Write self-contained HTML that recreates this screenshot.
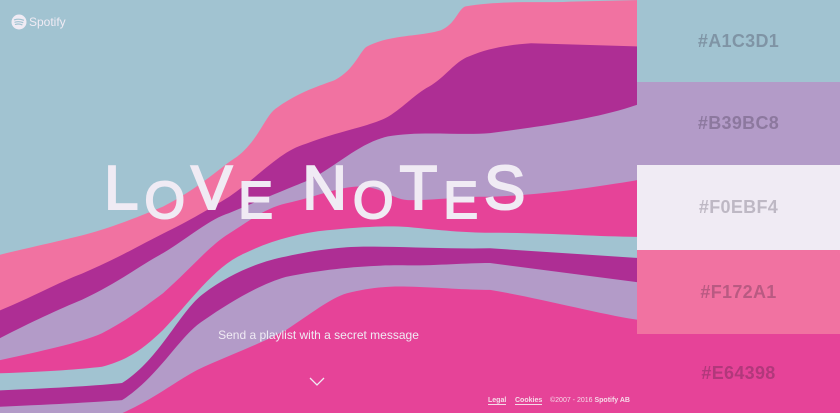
<!DOCTYPE html>
<html><head><meta charset="utf-8"><style>
*{margin:0;padding:0;box-sizing:border-box}
html,body{width:840px;height:413px;overflow:hidden}
body{position:relative;font-family:"Liberation Sans",sans-serif;background:#E64398}
svg.bg{position:absolute;left:0;top:0}
.sw{position:absolute;left:637px;width:203px;display:flex;align-items:center;justify-content:center;font-weight:bold;font-size:18px;color:rgba(40,30,50,0.28);letter-spacing:0.3px}
.title{position:absolute;left:104px;top:158px;height:70px;color:#f0ebf4;white-space:nowrap;font-size:62px;line-height:1;letter-spacing:6px;-webkit-text-stroke:2px #f0ebf4}
.title span{display:inline-block}
.s{font-size:52px;position:relative;top:9px}
.sub{position:absolute;left:0;width:637px;text-align:center;top:328px;color:#f0ebf4;font-size:12px}
.foot{position:absolute;top:397px;font-size:7px;color:#f5dbe9}
.foot u{text-decoration:none;border-bottom:1px solid #f5dbe9;font-weight:bold}
</style></head><body>
<svg class="bg" width="640" height="413" viewBox="0 0 640 413">
<rect width="640" height="413" fill="#A1C3D1"/>
<g transform="scale(1,0.8167)">
<path d="M0 312 C40 300 80 290 100 282 C130 270 145 262 163 253 C200 230 220 205 237 192 C260 170 265 140 278 131 C300 112 320 105 335 98 C355 85 360 62 367 57 C390 42 420 45 441 37 C455 30 458 12 465 8 C500 0 540 4 571 2 L640 0 L640 600 L0 600Z" fill="#F172A1"/>
<path d="M0 380 C30 365 60 345 82 335 C120 315 140 300 163 286 C190 270 210 255 229 241 C260 215 280 185 306 176 C340 160 370 155 388 143 C405 130 415 115 429 106 C445 95 455 75 469 69 C490 58 510 55 531 53 L640 57 L640 600 L0 600Z" fill="#AE2E94"/>
<path d="M0 414 C30 395 60 378 82 367 C120 345 140 325 163 310 C190 290 210 268 229 261 C260 245 290 230 310 220 C340 200 360 175 388 167 C420 160 460 166 490 163 C540 155 600 145 640 127 L640 600 L0 600Z" fill="#B39BC8"/>
<path d="M0 441 C40 430 80 420 102 408 C130 390 145 375 163 359 C190 330 210 300 229 286 C250 270 265 255 286 249 C320 240 345 225 367 229 C385 232 395 245 408 245 C440 245 465 240 490 241 C550 238 600 228 640 220 L640 600 L0 600Z" fill="#E64398"/>
<path d="M0 457 C50 455 80 452 102 449 C130 440 145 425 163 404 C190 370 215 325 245 310 C270 295 300 285 327 282 C360 278 385 276 408 278 C440 282 465 285 490 285 C550 285 600 290 640 290 L640 600 L0 600Z" fill="#A1C3D1"/>
<path d="M0 478 C60 475 100 472 122 469 C160 440 180 380 204 359 C230 335 260 320 286 314 C320 305 345 302 367 302 C410 302 450 305 490 304 L640 316 L640 600 L0 600Z" fill="#AE2E94"/>
<path d="M0 498 C60 495 100 492 122 490 C160 460 180 410 204 392 C230 370 260 348 286 339 C330 328 375 324 408 325 C440 325 465 322 490 322 L640 346 L640 600 L0 600Z" fill="#B39BC8"/>
<path d="M0 520 L122 506 C160 485 180 462 204 449 C240 430 265 418 286 404 C310 385 330 365 347 359 C370 352 390 350 408 351 C440 352 465 355 490 355 C540 365 600 385 640 392 L640 600 L0 600Z" fill="#E64398"/>
</g>
</svg>
<div class="sw" style="top:0;height:82px;background:#A1C3D1">#A1C3D1</div>
<div class="sw" style="top:82px;height:83px;background:#B39BC8">#B39BC8</div>
<div class="sw" style="top:165px;height:85px;background:#F0EBF4;color:rgba(40,30,50,0.25)">#F0EBF4</div>
<div class="sw" style="top:250px;height:84px;background:#F172A1">#F172A1</div>
<div class="sw" style="top:334px;height:79px;background:#E64398">#E64398</div>

<svg style="position:absolute;left:11px;top:14px" width="16" height="16" viewBox="0 0 16 16"><circle cx="8" cy="8" r="7.5" fill="#f0ebf4"/><path d="M3.5 5.8 Q8 4.4 12.5 6.2 M4 8.2 Q8 7 11.8 8.6 M4.4 10.4 Q8 9.5 11 10.8" stroke="#A1C3D1" stroke-width="1.2" fill="none" stroke-linecap="round"/></svg>
<div style="position:absolute;left:29px;top:15px;color:#f0ebf4;font-size:12px">Spotify</div>

<div class="title"><span>L</span><span class="s">O</span><span>V</span><span class="s">E</span> <span>N</span><span class="s">O</span><span>T</span><span class="s">E</span><span>S</span></div>
<div class="sub">Send a playlist with a secret message</div>
<svg style="position:absolute;left:309px;top:377px" width="16" height="10" viewBox="0 0 16 10"><path d="M1 1 L8 8 L15 1" stroke="#f0ebf4" stroke-width="1.3" fill="none"/></svg>
<div class="foot" style="left:488px"><u>Legal</u></div>
<div class="foot" style="left:515px"><u>Cookies</u></div>
<div class="foot" style="left:550px">©2007 - 2016 <b>Spotify AB</b></div>
</body></html>
